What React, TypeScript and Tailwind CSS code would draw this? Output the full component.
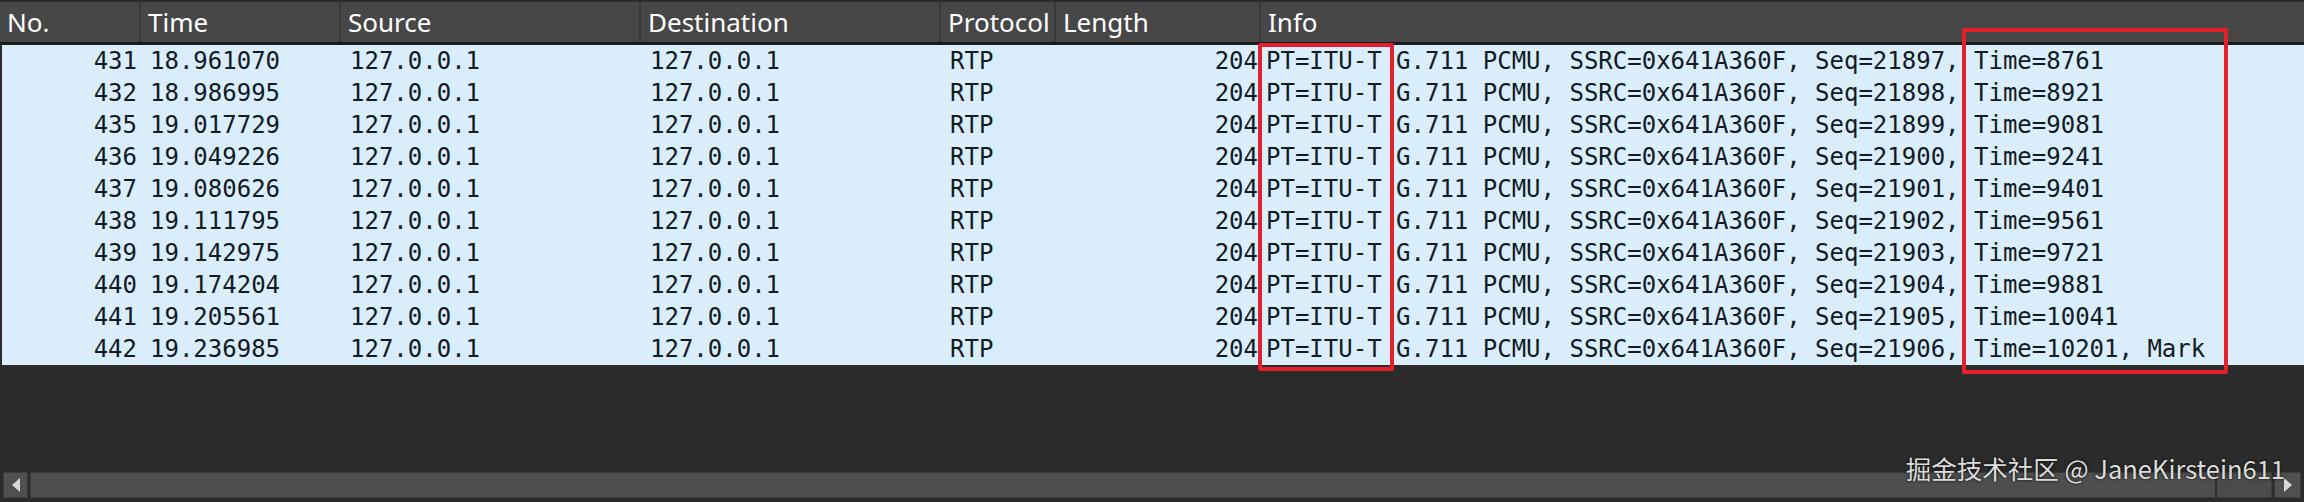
const rows = [
  { no: 431, time: "18.961070", seq: 21897, ts: "8761" },
  { no: 432, time: "18.986995", seq: 21898, ts: "8921" },
  { no: 435, time: "19.017729", seq: 21899, ts: "9081" },
  { no: 436, time: "19.049226", seq: 21900, ts: "9241" },
  { no: 437, time: "19.080626", seq: 21901, ts: "9401" },
  { no: 438, time: "19.111795", seq: 21902, ts: "9561" },
  { no: 439, time: "19.142975", seq: 21903, ts: "9721" },
  { no: 440, time: "19.174204", seq: 21904, ts: "9881" },
  { no: 441, time: "19.205561", seq: 21905, ts: "10041" },
  { no: 442, time: "19.236985", seq: 21906, ts: "10201, Mark" },
];

// widths of the packet list columns, last one takes the rest
const cols = [
  { title: "No.", w: "w-[141px]" },
  { title: "Time", w: "w-[200px]" },
  { title: "Source", w: "w-[300px]" },
  { title: "Destination", w: "w-[300px]" },
  { title: "Protocol", w: "w-[115px]" },
  { title: "Length", w: "w-[205px]" },
  { title: "Info", w: "flex-1" },
];

export default function App() {
  return (
    <div className="w-[2304px] h-[502px] bg-[#2b2b2b] relative flex flex-col overflow-hidden">
      {/* header */}
      <div className="h-[43px] mt-[2px] bg-[#474747] border-b-[3px] border-[#1b1b1b] flex text-white text-[26px] font-['Noto_Sans',sans-serif] leading-none">
        {cols.map((c, i) => (
          <div
            key={i}
            className={`${c.w} h-full flex items-center pl-[7px] ${i < cols.length - 1 ? "border-r-2 border-[#393939]" : ""}`}
          >
            {c.title}
          </div>
        ))}
      </div>

      {/* rows */}
      <div className="bg-[#daedfb] ml-[2px] text-[#121a24] text-[24px] font-['DejaVu_Sans_Mono',monospace] leading-none">
        {rows.map((r) => (
          <div key={r.no} className="h-[32px] flex items-center whitespace-pre">
            <div className="w-[139px] text-right pr-[4px]">{r.no}</div>
            <div className="w-[200px] pl-[9px]">{r.time}</div>
            <div className="w-[300px] pl-[9px]">127.0.0.1</div>
            <div className="w-[300px] pl-[9px]">127.0.0.1</div>
            <div className="w-[115px] pl-[9px]">RTP</div>
            <div className="w-[205px] text-right pr-[3px]">204</div>
            <div className="flex-1 pl-[5px]">
              {`PT=ITU-T G.711 PCMU, SSRC=0x641A360F, Seq=${r.seq}, Time=${r.ts}`}
            </div>
          </div>
        ))}
      </div>

      {/* horizontal scrollbar */}
      <div className="mt-auto mb-[4px] h-[26px] mx-[3px] flex gap-[2px]">
        <div className="w-[25px] h-full bg-[#505050] border border-[#3a3a3a] flex items-center justify-center">
          <svg width="10" height="16" viewBox="0 0 10 16">
            <path d="M9 1 L1 8 L9 15 Z" fill="#d8d8d8" />
          </svg>
        </div>
        <div className="flex-1 h-full bg-[#4b4b4b] border border-[#3a3a3a] flex">
          <div className="w-[2186px] h-full border-r-2 border-[#2e2e2e] bg-[#4e4e4e]" />
          <div className="flex-1" />
        </div>
        <div className="w-[27px] h-full bg-[#505050] border border-[#3a3a3a] flex items-center justify-center">
          <svg width="10" height="16" viewBox="0 0 10 16">
            <path d="M1 1 L9 8 L1 15 Z" fill="#d8d8d8" />
          </svg>
        </div>
      </div>

      {/* red highlight boxes */}
      <div className="absolute left-[1258px] top-[43px] w-[136px] h-[328px] border-[4px] border-[#e3202c] rounded-[2px]" />
      <div className="absolute left-[1962px] top-[28px] w-[266px] h-[346px] border-[4px] border-[#e3202c] rounded-[2px]" />

      {/* watermark */}
      <div className="absolute right-[19px] top-[455px] text-[25.5px] leading-none text-[#dcdcdc] font-['Noto_Sans_CJK_SC',sans-serif] [text-shadow:0_0_3px_rgba(0,0,0,0.9)] whitespace-pre">
        掘金技术社区 @ JaneKirstein611
      </div>
    </div>
  );
}
